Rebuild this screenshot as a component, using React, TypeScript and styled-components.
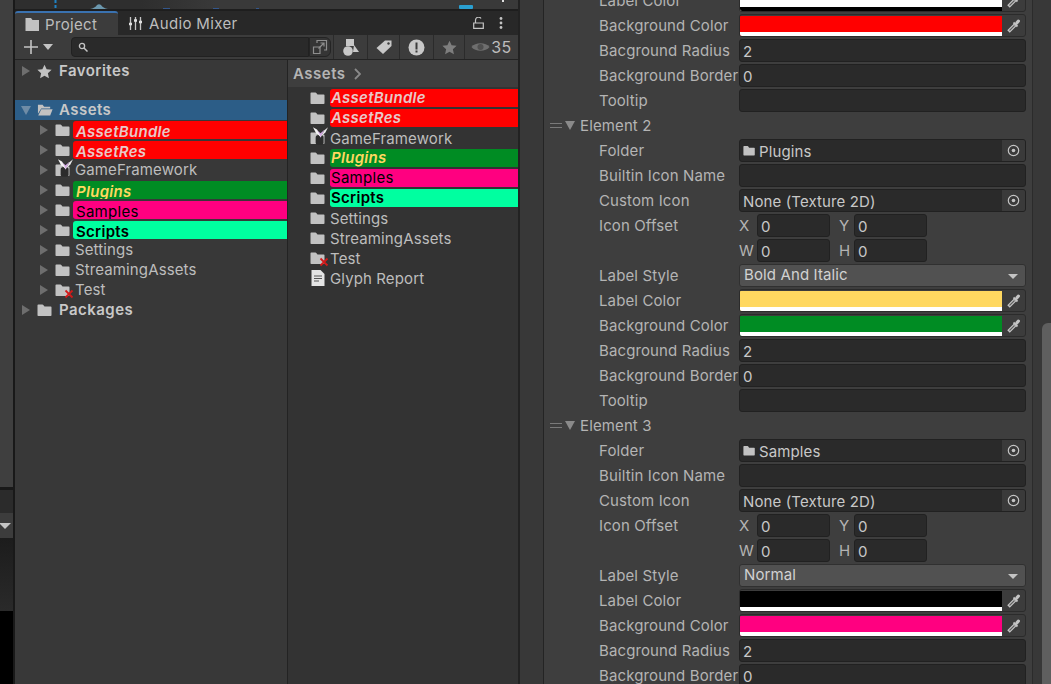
import React from 'react';
import styled, { createGlobalStyle, css } from 'styled-components';

const GlobalStyle = createGlobalStyle`
  html, body {
    margin: 0;
    padding: 0;
    background: #191919;
    overflow: hidden;
  }
  * {
    box-sizing: border-box;
  }
`;

const Page = styled.div`
  display: flex;
  width: 1051px;
  height: 684px;
  overflow: hidden;
  background: #191919;
  font-family: Inter, 'Liberation Sans', sans-serif;
  font-size: 15px;
  letter-spacing: 0.12px;
  color: #bdbdbd;
`;

/* left sliver of the neighbouring windows */
const EdgeColumn = styled.div`
  display: flex;
  flex-direction: column;
  width: 13px;
  margin-right: 2px;
  flex-shrink: 0;
`;

const EdgeView = styled.div`
  height: 487px;
  margin-bottom: 3px;
  background: #3f3f3f;
`;

const EdgeTab = styled.div`
  height: 23px;
  background: #2b2b2b;
`;

const EdgeToolbar = styled.div`
  display: flex;
  align-items: center;
  height: 25px;
  background: #3c3c3c;
`;

const EdgeArrow = styled.div`
  width: 0;
  height: 0;
  margin-left: -1px;
  border-left: 6px solid transparent;
  border-right: 6px solid transparent;
  border-top: 6px solid #c4c4c4;
`;

const EdgeGradient = styled.div`
  height: 73px;
  background: linear-gradient(#1c1c1c, #2a2a2a);
`;

const EdgeBlack = styled.div`
  flex: 1;
  background: #000;
`;

const ProjectWindow = styled.div`
  display: flex;
  flex-direction: column;
  width: 505px;
  flex-shrink: 0;
  background: #282828;
  border-right: 2px solid #222222;
`;

const Gutter = styled.div`
  width: 23px;
  flex-shrink: 0;
  background: #383838;
`;

const SceneSliver = styled.svg`
  display: block;
  width: 503px;
  height: 11px;
  flex-shrink: 0;
  background: linear-gradient(90deg, #2e2e2e 0, #2e2e2e 25%, #393939 40%);
  border-bottom: 2px solid #1e1e1e;
`;

const TabBar = styled.div`
  display: flex;
  align-items: center;
  height: 24px;
  flex-shrink: 0;
  background: #282828;
`;

const Tab = styled.div<{ $active?: boolean }>`
  display: flex;
  align-items: center;
  gap: 6px;
  height: 24px;
  padding-left: 10px;
  white-space: nowrap;
  color: #bdbdbd;
  letter-spacing: 0.35px;
  ${p =>
    p.$active &&
    css`
      width: 103px;
      gap: 5px;
      background: #3c3c3c;
      border-top: 2px solid #3a72b0;
      border-radius: 3px 3px 0 0;
    `}
`;

const TabActions = styled.div`
  display: flex;
  align-items: center;
  gap: 15px;
  margin-left: auto;
  padding-right: 15px;
`;

const Toolbar = styled.div`
  display: flex;
  align-items: center;
  height: 25px;
  flex-shrink: 0;
  background: #3c3c3c;
  border-bottom: 1px solid #232323;
`;

const AddButton = styled.div`
  display: flex;
  align-items: center;
  gap: 4px;
  width: 56px;
  padding-left: 8px;
`;

const SearchBox = styled.div`
  display: flex;
  align-items: center;
  width: 238px;
  height: 20px;
  padding-left: 6px;
  background: #2a2a2a;
  border: 1px solid #212121;
  border-radius: 4px 0 0 4px;
`;

const SearchToggle = styled.div`
  display: flex;
  align-items: center;
  justify-content: center;
  width: 22px;
  height: 20px;
  background: #353535;
  border: 1px solid #242424;
  border-radius: 0 6px 6px 0;
`;

const ToolButton = styled.div<{ $width: number }>`
  display: flex;
  align-items: center;
  justify-content: center;
  gap: 1px;
  width: ${p => p.$width}px;
  height: 24px;
  border-left: 1px solid #2b2b2b;
  color: #bdbdbd;
  font-size: 16px;
  letter-spacing: 0.4px;
`;

const ToolGroup = styled.div`
  display: flex;
  margin-left: 2px;
`;

const Browser = styled.div`
  display: flex;
  flex: 1;
  min-height: 0;
`;

const TreePane = styled.div`
  width: 273px;
  flex-shrink: 0;
  background: #383838;
  border-right: 1px solid #232323;
  padding-top: 1px;
`;

const ListPane = styled.div`
  display: flex;
  flex-direction: column;
  width: 230px;
  flex-shrink: 0;
  background: #333333;
`;

const Breadcrumb = styled.div`
  display: flex;
  align-items: center;
  gap: 8px;
  height: 27px;
  padding-left: 5px;
  background: #3e3e3e;
  font-weight: 600;
  letter-spacing: 0.5px;
  color: #b4b4b4;
`;

const TreeRow = styled.div<{ $depth: number; $selected?: boolean; $gapAfter?: boolean }>`
  display: flex;
  align-items: center;
  height: 20px;
  padding-left: ${p => (p.$depth === 0 ? 6 : 24)}px;
  background: ${p => (p.$selected ? '#2c5d87' : 'transparent')};
  margin-bottom: ${p => (p.$gapAfter ? 19 : 0)}px;
`;

const ListItems = styled.div`
  display: flex;
  flex-direction: column;
  padding-top: 1px;
`;

const ListRow = styled.div`
  display: flex;
  align-items: center;
  height: 20px;
  padding-left: 22px;
`;

const Arrow = styled.span<{ $open?: boolean }>`
  width: 0;
  height: 0;
  flex-shrink: 0;
  ${p =>
    p.$open
      ? css`
          margin-right: 6px;
          border-left: 5px solid transparent;
          border-right: 5px solid transparent;
          border-top: 9px solid #6f8ca6;
        `
      : css`
          margin-right: 7px;
          margin-left: 1px;
          border-top: 5px solid transparent;
          border-bottom: 5px solid transparent;
          border-left: 8px solid #6e6e6e;
        `}
`;

const IconSlot = styled.span`
  position: relative;
  display: flex;
  align-items: center;
  width: 16px;
  height: 16px;
  flex-shrink: 0;
`;

const Overlay = styled.svg<{ $kind: 'cross' | 'butterfly' }>`
  position: absolute;
  ${p =>
    p.$kind === 'cross'
      ? css`
          left: 9px;
          top: 7px;
          width: 10px;
          height: 10px;
        `
      : css`
          left: 3px;
          top: -3px;
          width: 15px;
          height: 18px;
        `}
`;

const Label = styled.span<{ $root?: boolean; $inTree?: boolean }>`
  margin-left: ${p => (p.$root ? 6 : 4)}px;
  padding-bottom: ${p => (p.$inTree ? 2 : 0)}px;
  white-space: nowrap;
  color: ${p => (p.$root ? '#c8c8c8' : '#bdbdbd')};
  font-weight: ${p => (p.$root ? 600 : 400)};
  letter-spacing: ${p => (p.$root ? 0.45 : 0.12)}px;
`;

const Bar = styled.div<{ $bg: string; $fg: string; $bold?: boolean; $italic?: boolean; $inTree?: boolean }>`
  display: flex;
  align-items: center;
  flex: 1;
  height: 18px;
  margin-left: ${p => (p.$inTree ? 2 : 4)}px;
  padding: ${p => (p.$inTree ? '3px 0 0 3px' : '0 0 1px 1px')};
  overflow: hidden;
  background: ${p => p.$bg};
  color: ${p => p.$fg};
  font-weight: ${p => (p.$bold ? 600 : 400)};
  font-style: ${p => (p.$italic ? 'italic' : 'normal')};
  letter-spacing: 0.28px;
  border-radius: 3px 0 0 3px;
  white-space: nowrap;
`;

const Inspector = styled.div`
  display: flex;
  width: 508px;
  flex-shrink: 0;
  background: #383838;
`;

const InspectorBody = styled.div`
  width: 490px;
  height: 684px;
  overflow: hidden;
  background: #3e3e3e;
  border-left: 1px solid #242424;
  border-right: 1px solid #2b2b2b;
`;

const ScrollTrack = styled.div`
  position: relative;
  flex: 1;
  background: #383838;
`;

const ScrollThumb = styled.div`
  position: absolute;
  right: 0;
  top: 323px;
  width: 9px;
  height: 361px;
  background: #5f5f5f;
  border-radius: 6px 0 0 0;
`;

const Rows = styled.div`
  margin-top: -12px;
  padding-right: 6px;
`;

const Row = styled.div`
  display: flex;
  align-items: center;
  height: 25px;
`;

const FieldLabel = styled.div`
  width: 195px;
  flex-shrink: 0;
  padding-left: 55px;
  white-space: nowrap;
  color: #b4b4b4;
`;

const ElementHead = styled.div`
  display: flex;
  align-items: center;
  height: 25px;
  padding-left: 6px;
  color: #b4b4b4;
`;

const Handle = styled.span`
  width: 12px;
  height: 5px;
  margin-right: 3px;
  border-top: 1px solid #7a7a7a;
  border-bottom: 1px solid #7a7a7a;
`;

const HeadArrow = styled.span`
  width: 0;
  height: 0;
  margin-right: 5px;
  border-left: 5px solid transparent;
  border-right: 5px solid transparent;
  border-top: 9px solid #8a8a8a;
`;

const fieldBox = css`
  height: 23px;
  border: 1px solid #212121;
  border-radius: 3px;
  background: #2a2a2a;
  color: #c8c8c8;
`;

const TextField = styled.div`
  ${fieldBox};
  flex: 1;
  padding: 2px 0 0 3px;
  white-space: nowrap;
`;

const ObjectField = styled.div`
  ${fieldBox};
  display: flex;
  align-items: center;
  flex: 1;
  padding-left: 3px;
  gap: 3px;
  overflow: hidden;
`;

const ObjectText = styled.span`
  flex: 1;
  padding-top: 2px;
  white-space: nowrap;
`;

const Picker = styled.span`
  display: flex;
  align-items: center;
  justify-content: center;
  width: 23px;
  height: 21px;
  background: #3a3a3a;
`;

const Dropdown = styled.div`
  display: flex;
  align-items: center;
  justify-content: space-between;
  flex: 1;
  height: 23px;
  padding: 0 7px 2px 4px;
  border: 1px solid #303030;
  border-radius: 3px;
  background: #515151;
  color: #d2d2d2;
`;

const DropArrow = styled.span`
  width: 0;
  height: 0;
  margin-top: 3px;
  border-left: 5px solid transparent;
  border-right: 5px solid transparent;
  border-top: 5px solid #c4c4c4;
`;

const ColorField = styled.div`
  display: flex;
  flex: 1;
  height: 23px;
  padding-top: 1px;
  background: #3c3c3c;
  border: 1px solid #2b2b2b;
  border-radius: 3px;
  overflow: hidden;
`;

const Swatch = styled.div<{ $color: string; $alpha: string }>`
  flex: 1;
  background: ${p => p.$color};
  border-bottom: 4px solid ${p => p.$alpha};
`;

const Eyedropper = styled.span`
  display: flex;
  align-items: center;
  justify-content: center;
  width: 23px;
`;

const VectorCell = styled.div`
  display: flex;
  align-items: center;
`;

const AxisLabel = styled.span<{ $second?: boolean }>`
  width: ${p => (p.$second ? 15 : 18)}px;
  margin-left: ${p => (p.$second ? 9 : 0)}px;
  color: #b4b4b4;
  letter-spacing: 0;
`;

const AxisInput = styled.div`
  ${fieldBox};
  width: 73px;
  padding: 2px 0 0 3px;
`;

function FolderIcon({ size = 16 }: { size?: number }) {
  return (
    <svg width={size} height={size} viewBox="0 0 16 16">
      <path
        d="M.5 3.300q0-.8.8-.8h4.200q.5 0 .8.4l1.200 1.600h6.200q.8 0 .8.8v8q0 .8-.8.8H1.300q-.8 0-.8-.8z"
        fill="#c2c2c2"
      />
    </svg>
  );
}

function OpenFolderIcon() {
  return (
    <svg width="17" height="16" viewBox="0 0 17 16">
      <path d="M1 2.500h5l1.500 2H14v2H4.500L1 12z" fill="#c2c2c2" />
      <path d="M4.600 7.200H16.600L14 13.800H1.300z" fill="#c2c2c2" />
    </svg>
  );
}

function DocIcon() {
  return (
    <svg width="16" height="18" viewBox="0 0 16 18">
      <path d="M1.500 1h9l4 4v12h-13z" fill="#e4e4e4" />
      <path d="M4 7h8M4 9.500h8M4 12h5" stroke="#555" strokeWidth="1.100" />
    </svg>
  );
}

function Star({ color }: { color: string }) {
  return (
    <svg width="15" height="15" viewBox="0 0 24 24">
      <path d="M12 1l3.400 7.400 8 .9-6 5.400 1.700 8L12 18.700l-7.100 4 1.700-8-6-5.400 8-.9z" fill={color} />
    </svg>
  );
}

function Cross() {
  return (
    <Overlay $kind="cross" viewBox="0 0 10 10">
      <path d="M1.500 1.500l7 7M8.500 1.500l-7 7" stroke="#d11a1a" strokeWidth="1.800" />
    </Overlay>
  );
}

function Butterfly() {
  return (
    <>
      <FolderIcon />
      <Overlay $kind="butterfly" viewBox="0 0 17 20">
        <rect x="3" y="9" width="9" height="11" rx="3" fill="#2c2c2c" />
        <path d="M4 3l4.500 4L13 3l-4.500 9z" fill="#d4a8e4" />
        <path d="M0 0l4.500 2.500L9 11 3.500 7z" fill="#f4f4f4" />
        <path d="M17 0l-4 3.500L8.500 11 14 6z" fill="#ececec" />
      </Overlay>
    </>
  );
}

function Target() {
  return (
    <svg width="13" height="13" viewBox="0 0 13 13">
      <circle cx="6.500" cy="6.500" r="5.200" fill="none" stroke="#c4c4c4" strokeWidth="1.200" />
      <circle cx="6.500" cy="6.500" r="1.800" fill="#c4c4c4" />
    </svg>
  );
}

function Dropper() {
  return (
    <svg width="14" height="14" viewBox="0 0 14 14">
      <path d="M1.500 12.500L8 6" stroke="#c4c4c4" strokeWidth="3.600" />
      <path d="M2.500 11.500L7.500 6.500" stroke="#5c5c5c" strokeWidth="1.100" />
      <path d="M6.500 3.500l4 4" stroke="#c4c4c4" strokeWidth="1.800" />
      <path d="M8 5l.5-2L10.500.8q1-.8 2 .2t.2 2L10.500 5.500 9 6z" fill="#c4c4c4" />
    </svg>
  );
}

type Tag = { bg: string; fg: string; bold?: boolean; italic?: boolean };
type Entry = { name: string; tag?: Tag; icon?: 'folder' | 'butterfly' | 'test' | 'doc' };

const red: Tag = { bg: '#ff0000', fg: '#e8c8c8', bold: true, italic: true };

const assets: Entry[] = [
  { name: 'AssetBundle', tag: red },
  { name: 'AssetRes', tag: red },
  { name: 'GameFramework', icon: 'butterfly' },
  { name: 'Plugins', tag: { bg: '#008c23', fg: '#ffd860', bold: true, italic: true } },
  { name: 'Samples', tag: { bg: '#ff0080', fg: '#000000' } },
  { name: 'Scripts', tag: { bg: '#00ffa0', fg: '#000000', bold: true } },
  { name: 'Settings' },
  { name: 'StreamingAssets' },
  { name: 'Test', icon: 'test' },
];

function EntryIcon({ icon }: { icon?: Entry['icon'] }) {
  if (icon === 'doc') return <IconSlot><DocIcon /></IconSlot>;
  if (icon === 'butterfly') return <IconSlot><Butterfly /></IconSlot>;
  return (
    <IconSlot>
      <FolderIcon />
      {icon === 'test' && <Cross />}
    </IconSlot>
  );
}

function EntryLabel({ entry, inTree }: { entry: Entry; inTree?: boolean }) {
  if (entry.tag) {
    const { bg, fg, bold, italic } = entry.tag;
    return (
      <Bar $bg={bg} $fg={fg} $bold={bold} $italic={italic} $inTree={inTree}>
        {entry.name}
      </Bar>
    );
  }
  return <Label $inTree={inTree}>{entry.name}</Label>;
}

function VectorRow({ a, b, label }: { a: string; b: string; label?: string }) {
  return (
    <Row>
      <FieldLabel>{label}</FieldLabel>
      <VectorCell>
        <AxisLabel>{a}</AxisLabel>
        <AxisInput>0</AxisInput>
        <AxisLabel $second>{b}</AxisLabel>
        <AxisInput>0</AxisInput>
      </VectorCell>
    </Row>
  );
}

function ColorRow({ label, color, alpha = '#ffffff' }: { label: string; color: string; alpha?: string }) {
  return (
    <Row>
      <FieldLabel>{label}</FieldLabel>
      <ColorField>
        <Swatch $color={color} $alpha={alpha} />
        <Eyedropper><Dropper /></Eyedropper>
      </ColorField>
    </Row>
  );
}

function TextRow({ label, value }: { label: string; value?: string }) {
  return (
    <Row>
      <FieldLabel>{label}</FieldLabel>
      <TextField>{value}</TextField>
    </Row>
  );
}

function ObjectRow({ label, value, folder }: { label: string; value: string; folder?: boolean }) {
  return (
    <Row>
      <FieldLabel>{label}</FieldLabel>
      <ObjectField>
        {folder && <FolderIcon size={13} />}
        <ObjectText>{value}</ObjectText>
        <Picker><Target /></Picker>
      </ObjectField>
    </Row>
  );
}

function ElementBlock({ title, folder, style, label, background, alpha }: {
  title: string;
  folder: string;
  style: string;
  label: string;
  background: string;
  alpha?: string;
}) {
  return (
    <>
      <ElementHead>
        <Handle />
        <HeadArrow />
        {title}
      </ElementHead>
      <ObjectRow label="Folder" value={folder} folder />
      <TextRow label="Builtin Icon Name" />
      <ObjectRow label="Custom Icon" value="None (Texture 2D)" />
      <VectorRow label="Icon Offset" a="X" b="Y" />
      <VectorRow a="W" b="H" />
      <Row>
        <FieldLabel>Label Style</FieldLabel>
        <Dropdown>
          {style}
          <DropArrow />
        </Dropdown>
      </Row>
      <ColorRow label="Label Color" color={label} alpha={alpha} />
      <ColorRow label="Background Color" color={background} />
      <TextRow label="Bacground Radius" value="2" />
      <TextRow label="Background Border" value="0" />
    </>
  );
}

export default function App() {
  return (
    <Page>
      <GlobalStyle />
      <EdgeColumn>
        <EdgeView />
        <EdgeTab />
        <EdgeToolbar><EdgeArrow /></EdgeToolbar>
        <EdgeGradient />
        <EdgeBlack />
      </EdgeColumn>

      <ProjectWindow>
        <SceneSliver viewBox="0 0 503 9">
          <path d="M40.500 0v9" stroke="#1f82c4" strokeWidth="2" strokeDasharray="3 2" />
          <path d="M75 9q5-1 7-4 2-1.500 4 0 2 3 7 4z" fill="#6b97ad" />
          <path d="M148 8h7v1h-7zM198 8h6v1h-6zM241 8h3v1h-3z" fill="#34578c" />
          <rect x="444" y="5" width="14" height="4" rx="1" fill="#2a9fd0" />
          <rect x="487" y="0" width="2" height="2" fill="#e0e0e0" />
        </SceneSliver>
        <TabBar>
          <Tab $active>
            <svg width="15" height="13" viewBox="0 0 15 13">
              <path d="M.5 0h5.500l1.500 2H14v11H.5z" fill="#c2c2c2" />
            </svg>
            Project
          </Tab>
          <Tab>
            <svg width="15" height="13" viewBox="0 0 15 13">
              <path d="M2.500 0v13M7.500 0v13M12.500 0v13" stroke="#c4c4c4" strokeWidth="1.300" />
              <path d="M1 7h3M6 3.500h3M11 5h3" stroke="#e0e0e0" strokeWidth="2.500" />
            </svg>
            Audio Mixer
          </Tab>
          <TabActions>
            <svg width="11" height="12" viewBox="0 0 11 12">
              <path d="M.7 6h9.600v5.300H.7zM2.500 6V3a3 3 0 0 1 5.500-1.500" fill="none" stroke="#c4c4c4" strokeWidth="1.200" />
            </svg>
            <svg width="4" height="12" viewBox="0 0 4 12">
              <circle cx="2" cy="1.500" r="1.400" fill="#c4c4c4" />
              <circle cx="2" cy="6" r="1.400" fill="#c4c4c4" />
              <circle cx="2" cy="10.500" r="1.400" fill="#c4c4c4" />
            </svg>
          </TabActions>
        </TabBar>
        <Toolbar>
          <AddButton>
            <svg width="16" height="16" viewBox="0 0 16 16">
              <path d="M8 1v14M1 8h14" stroke="#c4c4c4" strokeWidth="1.600" />
            </svg>
            <svg width="10" height="6" viewBox="0 0 10 6">
              <path d="M0 0h10L5 6z" fill="#c4c4c4" />
            </svg>
          </AddButton>
          <SearchBox>
            <svg width="10" height="10" viewBox="0 0 10 10">
              <circle cx="4" cy="4" r="2.600" fill="none" stroke="#c4c4c4" strokeWidth="1.300" />
              <path d="M6 6l3.500 3.500" stroke="#c4c4c4" strokeWidth="1.500" />
            </svg>
          </SearchBox>
          <SearchToggle>
            <svg width="16" height="16" viewBox="0 0 16 16">
              <path d="M1.500 8v6.500H8V8zM5 4V1.500h9.500V11H12" fill="none" stroke="#8e8e8e" strokeWidth="1.200" />
              <path d="M6.500 9.500L12 4M8.500 4H12v3.500" fill="none" stroke="#8e8e8e" strokeWidth="1.200" />
            </svg>
          </SearchToggle>
          <ToolGroup>
            <ToolButton $width={34}>
              <svg width="16" height="17" viewBox="0 0 16 17">
                <rect x="3" y="0" width="8" height="7" fill="#c8c8c8" />
                <circle cx="5" cy="12" r="4.800" fill="#c8c8c8" />
                <path d="M11 6l5 7h-6z" fill="#c8c8c8" />
              </svg>
            </ToolButton>
            <ToolButton $width={32}>
              <svg width="16" height="14" viewBox="0 0 16 14">
                <path d="M9 .5h6.500V6L7 14 .5 8z" fill="#c8c8c8" />
                <circle cx="12.500" cy="3.500" r="1.200" fill="#3c3c3c" />
              </svg>
            </ToolButton>
            <ToolButton $width={34}>
              <svg width="17" height="17" viewBox="0 0 17 17">
                <circle cx="8.500" cy="8.500" r="8" fill="#c8c8c8" />
                <path d="M7.500 3.500h2v7h-2zM7.500 11.500h2v2h-2z" fill="#3c3c3c" />
              </svg>
            </ToolButton>
            <ToolButton $width={31}><Star color="#7e7e7e" /></ToolButton>
            <ToolButton $width={54}>
              <svg width="19" height="12" viewBox="0 0 19 12">
                <path d="M.5 6C4 1 15 1 18.500 6 15 11 4 11 .5 6z" fill="#6e6e6e" />
                <circle cx="9.500" cy="6" r="3" fill="#4f4f4f" />
              </svg>
              35
            </ToolButton>
          </ToolGroup>
        </Toolbar>
        <Browser>
          <TreePane>
            <TreeRow $depth={0} $gapAfter>
              <Arrow />
              <IconSlot><Star color="#c2c2c2" /></IconSlot>
              <Label $root $inTree>Favorites</Label>
            </TreeRow>
            <TreeRow $depth={0} $selected>
              <Arrow $open />
              <IconSlot><OpenFolderIcon /></IconSlot>
              <Label $root $inTree>Assets</Label>
            </TreeRow>
            {assets.map(entry => (
              <TreeRow $depth={1} key={entry.name}>
                <Arrow />
                <EntryIcon icon={entry.icon} />
                <EntryLabel entry={entry} inTree />
              </TreeRow>
            ))}
            <TreeRow $depth={0}>
              <Arrow />
              <IconSlot><FolderIcon /></IconSlot>
              <Label $root $inTree>Packages</Label>
            </TreeRow>
          </TreePane>
          <ListPane>
            <Breadcrumb>
              Assets
              <svg width="7" height="12" viewBox="0 0 7 12">
                <path d="M1 1l5 5-5 5" fill="none" stroke="#8a8a8a" strokeWidth="1.800" />
              </svg>
            </Breadcrumb>
            <ListItems>
              {[...assets, { name: 'Glyph Report', icon: 'doc' } as Entry].map(entry => (
                <ListRow key={entry.name}>
                  <EntryIcon icon={entry.icon} />
                  <EntryLabel entry={entry} />
                </ListRow>
              ))}
            </ListItems>
          </ListPane>
        </Browser>
      </ProjectWindow>

      <Gutter />

      <Inspector>
        <InspectorBody>
          <Rows>
            <ColorRow label="Label Color" color="#ffffff" alpha="#000000" />
            <ColorRow label="Background Color" color="#ff0000" />
            <TextRow label="Bacground Radius" value="2" />
            <TextRow label="Background Border" value="0" />
            <TextRow label="Tooltip" />
            <ElementBlock
              title="Element 2"
              folder="Plugins"
              style="Bold And Italic"
              label="#ffd860"
              background="#008c23"
            />
            <TextRow label="Tooltip" />
            <ElementBlock
              title="Element 3"
              folder="Samples"
              style="Normal"
              label="#000000"
              background="#ff0080"
            />
          </Rows>
        </InspectorBody>
        <ScrollTrack>
          <ScrollThumb />
        </ScrollTrack>
      </Inspector>
    </Page>
  );
}
